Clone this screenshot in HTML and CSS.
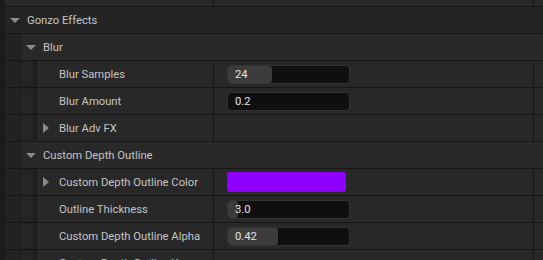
FILE: index.html
```html
<!DOCTYPE html>
<html lang="en">
<head>
    <meta charset="UTF-8">
    <title>Details Panel</title>
    <link rel="stylesheet" href="styles.css">
</head>
<body>
    <div class="panel">
        <div class="gutter"></div>
        <div class="rows">

            <!-- tail of the previous category -->
            <div class="row prop top">
                <div class="name"></div>
                <div class="value"></div>
                <div class="extra"></div>
            </div>

            <div class="row head">
                <div class="name full">
                    <span class="arrow down"></span>
                    <span class="label">Gonzo Effects</span>
                </div>
            </div>

            <div class="row head sub">
                <div class="name full">
                    <span class="indent"></span>
                    <span class="arrow down"></span>
                    <span class="label">Blur</span>
                </div>
            </div>

            <div class="row prop">
                <div class="name">
                    <span class="indent"></span><span class="indent"></span>
                    <span class="arrow"></span>
                    <span class="label">Blur Samples</span>
                </div>
                <div class="value">
                    <div class="slider"><div class="fill" style="width: 44px"></div><span>24</span></div>
                </div>
                <div class="extra"></div>
            </div>

            <div class="row prop">
                <div class="name">
                    <span class="indent"></span><span class="indent"></span>
                    <span class="arrow"></span>
                    <span class="label">Blur Amount</span>
                </div>
                <div class="value">
                    <div class="slider"><span>0.2</span></div>
                </div>
                <div class="extra"></div>
            </div>

            <div class="row prop">
                <div class="name">
                    <span class="indent"></span><span class="indent"></span>
                    <span class="arrow right"></span>
                    <span class="label">Blur Adv FX</span>
                </div>
                <div class="value"></div>
                <div class="extra"></div>
            </div>

            <div class="row head sub">
                <div class="name full">
                    <span class="indent"></span>
                    <span class="arrow down"></span>
                    <span class="label">Custom Depth Outline</span>
                </div>
            </div>

            <div class="row prop">
                <div class="name">
                    <span class="indent"></span><span class="indent"></span>
                    <span class="arrow right"></span>
                    <span class="label">Custom Depth Outline Color</span>
                </div>
                <div class="value">
                    <div class="swatch"></div>
                </div>
                <div class="extra"></div>
            </div>

            <div class="row prop">
                <div class="name">
                    <span class="indent"></span><span class="indent"></span>
                    <span class="arrow"></span>
                    <span class="label">Outline Thickness</span>
                </div>
                <div class="value">
                    <div class="slider"><div class="fill" style="width: 10px"></div><span>3.0</span></div>
                </div>
                <div class="extra"></div>
            </div>

            <div class="row prop">
                <div class="name">
                    <span class="indent"></span><span class="indent"></span>
                    <span class="arrow"></span>
                    <span class="label">Custom Depth Outline Alpha</span>
                </div>
                <div class="value">
                    <div class="slider"><div class="fill" style="width: 50px"></div><span>0.42</span></div>
                </div>
                <div class="extra"></div>
            </div>

            <div class="row prop">
                <div class="name">
                    <span class="indent"></span><span class="indent"></span>
                    <span class="arrow"></span>
                    <span class="label">Custom Depth Outline X-ray</span>
                </div>
                <div class="value">
                    <div class="check"></div>
                </div>
                <div class="extra"></div>
            </div>

        </div>
    </div>
</body>
</html>
```

FILE: styles.css
```css
body {
    margin: 0;
    background: #1a1a1a;
    font-family: Roboto, "Liberation Sans", sans-serif;
    font-size: 11.25px;
    color: #c4c4c4;
    overflow: hidden;
}

.panel {
    display: flex;
    height: 260px;
    overflow: hidden;
}

.gutter {
    width: 5px;
    flex: none;
    background: #1b1b1b;
}

.rows {
    flex: 1;
}

.row {
    display: grid;
    grid-template-columns: 208px 1fr 10px;
    height: 26px;
    border-bottom: 1px solid #161616;
    overflow: hidden;
}

.row.top {
    height: 6px;
}

.name {
    display: flex;
    align-items: center;
    background: #282828;
}

.name.full {
    grid-column: 1 / -1;
}

.head .name {
    background: #242424;
}

.head.sub .name {
    background: #292929;
}

.indent {
    width: 15px;
    height: 100%;
    flex: none;
    background: #222222;
    border-right: 1px solid #1c1c1c;
}

.indent + .indent {
    width: 12px;
    background: #252525;
    border-right: none;
    box-shadow: inset -4px 0 3px -1px #1c1c1c;
    padding-right: 4px;
}

.arrow {
    width: 22px;
    height: 100%;
    flex: none;
    position: relative;
}

.arrow.down::after {
    content: "";
    position: absolute;
    left: 5px;
    top: 11px;
    border-left: 5px solid transparent;
    border-right: 5px solid transparent;
    border-top: 5px solid #8a8a8a;
}

.arrow.right::after {
    content: "";
    position: absolute;
    left: 6px;
    top: 8px;
    border-top: 5px solid transparent;
    border-bottom: 5px solid transparent;
    border-left: 6px solid #8a8a8a;
}

.label {
    white-space: nowrap;
}

.value {
    display: flex;
    align-items: center;
    background: #282828;
    border-left: 1px solid #161616;
    padding-left: 13px;
}

.extra {
    background: #282828;
    border-left: 1px solid #161616;
}

.slider {
    position: relative;
    width: 121px;
    height: 17px;
    background: #0f0f0f;
    border: 1px solid #333333;
    border-radius: 4px;
    overflow: hidden;
    display: flex;
    align-items: center;
}

.slider .fill {
    position: absolute;
    left: 0;
    top: 0;
    bottom: 0;
    background: #3c3c3c;
    border-radius: 3px;
}

.slider span {
    position: relative;
    padding-left: 7px;
    color: #e4e4e4;
}

.swatch {
    width: 119px;
    height: 20px;
    background: #8f00ff;
    border-radius: 3px;
}

.check {
    align-self: flex-end;
    width: 16px;
    height: 5px;
    background: #0f0f0f;
    border: 1px solid #333333;
    border-bottom: none;
    border-radius: 3px 3px 0 0;
}
```
